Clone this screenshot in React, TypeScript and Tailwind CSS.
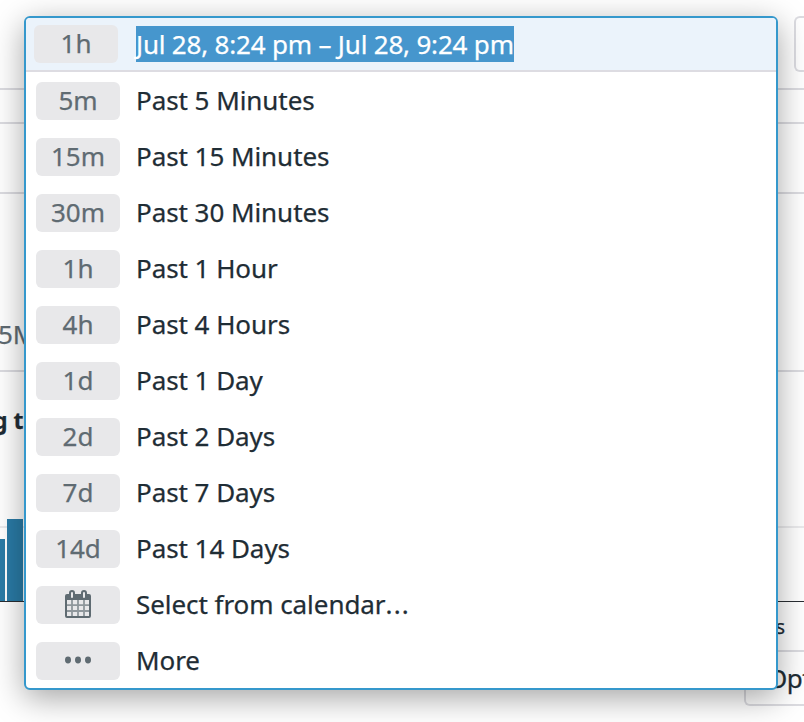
import React from "react";

const ranges: [string, string][] = [
  ["5m", "Past 5 Minutes"],
  ["15m", "Past 15 Minutes"],
  ["30m", "Past 30 Minutes"],
  ["1h", "Past 1 Hour"],
  ["4h", "Past 4 Hours"],
  ["1d", "Past 1 Day"],
  ["2d", "Past 2 Days"],
  ["7d", "Past 7 Days"],
  ["14d", "Past 14 Days"],
];

function Badge({ children }: { children: React.ReactNode }) {
  return (
    <div className="flex h-[38px] w-[84px] shrink-0 items-center justify-center rounded-md bg-[#e8e8ea] pb-0.5 text-[#5f6b72]">
      {children}
    </div>
  );
}

function Row({ badge, label }: { badge: React.ReactNode; label: React.ReactNode }) {
  return (
    <div className="flex h-14 items-center gap-4 pl-2.5">
      <Badge>{badge}</Badge>
      <span className="pb-0.5 tracking-[-0.06px]">{label}</span>
    </div>
  );
}

function CalendarIcon() {
  return (
    <svg width="26" height="28" viewBox="0 0 26 28" fill="none">
      <path
        fill="#5f6b72"
        fillRule="evenodd"
        d="M2 4h2V3a3 3 0 0 1 6 0v1h6V3a3 3 0 0 1 6 0v1h2a2 2 0 0 1 2 2v20a2 2 0 0 1-2 2H2a2 2 0 0 1-2-2V6a2 2 0 0 1 2-2zM2 10v16h22V10zM6 3v4a1 1 0 0 0 2 0V3a1 1 0 0 0-2 0zM18 3v4a1 1 0 0 0 2 0V3a1 1 0 0 0-2 0z"
      />
      <path stroke="#5f6b72" strokeOpacity=".65" strokeWidth="1.8" d="M7 10v16M13 10v16M19 10v16M2 15.2h22M2 21h22" />
    </svg>
  );
}

function DotsIcon() {
  return (
    <svg width="26" height="8" viewBox="0 0 26 8" fill="#5f6b72">
      <ellipse cx="3" cy="4" rx="3" ry="3.4" />
      <ellipse cx="13" cy="4" rx="3" ry="3.4" />
      <ellipse cx="23" cy="4" rx="3" ry="3.4" />
    </svg>
  );
}

function Page() {
  return (
    <div className="flex h-full flex-col">
      <div className="flex h-[90px] shrink-0 justify-end border-b-2 border-[#dcdce1] pt-4">
        <div className="h-14 w-2.5 rounded-l-md border-2 border-r-0 border-[#dcdce1]" />
      </div>
      <div className="h-[34px] shrink-0 border-b-2 border-[#dcdce1]" />
      <div className="h-[70px] shrink-0 border-b-2 border-[#dcdce1]" />
      <div className="h-[178px] shrink-0 border-b-2 border-[#dcdce1] pt-[122px]">
        <span className="-ml-0.5 block leading-9 text-[#5f6b72]">5M</span>
      </div>
      <div className="h-[154px] shrink-0 pt-8">
        <span className="-ml-[7px] block text-[23px] leading-8 font-bold">g to</span>
      </div>
      <div className="flex h-[76px] shrink-0 items-end border-b border-[#2a2e33] bg-[linear-gradient(#ebebed,#ebebed)] bg-[length:100%_2px] bg-no-repeat">
        <div className="flex h-[84px] items-end gap-0.5">
          <div className="h-[62px] w-[5px] bg-[#2a7ba6]" />
          <div className="h-[82px] w-4 bg-[#2a7ba6]" />
        </div>
      </div>
      <div className="flex h-[48px] shrink-0 justify-end pt-[11px]">
        <span className="mr-[19px] text-[20px] leading-7">logs</span>
      </div>
      <div className="flex shrink-0 justify-end">
        <div className="flex h-14 w-[60px] items-center overflow-hidden rounded-l-md border-2 border-r-0 border-[#dcdce1] pl-[21px] tracking-[-0.5px] whitespace-nowrap">
          Options
        </div>
      </div>
    </div>
  );
}

export default function App() {
  return (
    <div className="relative h-[722px] w-[804px] overflow-hidden bg-white font-['Noto_Sans',sans-serif] text-[26px] text-[#1f2d35] [-webkit-text-stroke:0.25px_currentColor]">
      <Page />
      <div className="absolute top-4 left-6 h-[674px] w-[754px] overflow-hidden rounded-md border-2 border-[#3598cc] bg-white shadow-[0_8px_32px_rgba(0,0,0,0.36)]">
        <div className="flex h-[54px] items-center gap-[18px] border-b-2 border-[#dddce2] bg-[#ebf3fb] pl-2">
          <Badge>1h</Badge>
          <span className="h-9 bg-[#4696cd] leading-9 tracking-[-0.19px] whitespace-nowrap text-white">
            Jul 28, 8:24 pm – Jul 28, 9:24 pm
          </span>
        </div>
        <div className="pt-px">
          {ranges.map(([short, label]) => (
            <Row key={short} badge={short} label={label} />
          ))}
          <Row
            badge={<CalendarIcon />}
            label={
              <>
                Select from calendar<span className="tracking-[1.2px]">...</span>
              </>
            }
          />
          <Row badge={<DotsIcon />} label="More" />
        </div>
      </div>
    </div>
  );
}
